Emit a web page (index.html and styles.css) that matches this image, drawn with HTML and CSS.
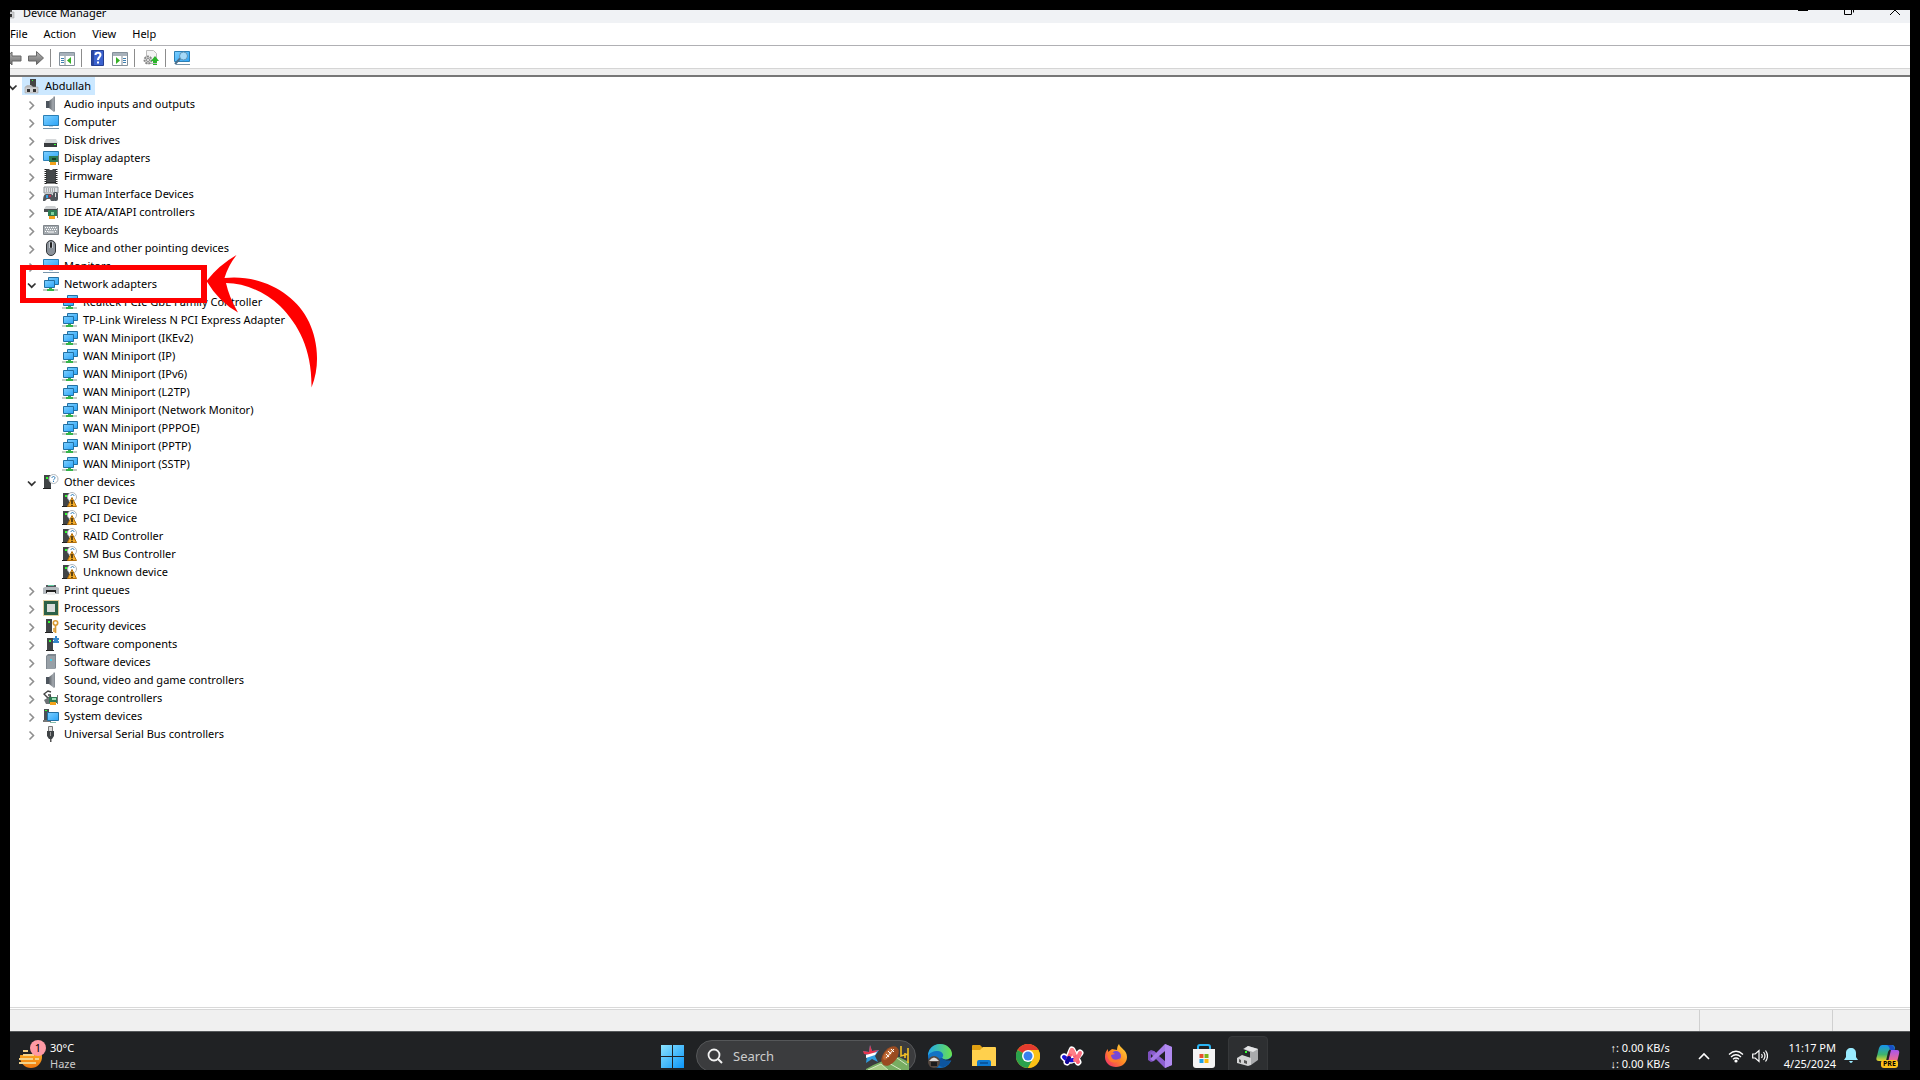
FILE: index.html
```html
<!DOCTYPE html>
<html lang="en">
<head>
    <meta charset="UTF-8">
    <meta name="viewport" content="width=device-width, initial-scale=1.0">
    <title>Device Manager</title>
    <link rel="stylesheet" href="styles.css">
</head>
<body>

    <!-- shared icons -->
    <svg class="sprite" aria-hidden="true">
        <defs>
            <linearGradient id="sky" x1="0" y1="0" x2="1" y2="1"><stop offset="0" stop-color="#7fd0ff"/><stop offset="1" stop-color="#2ba4f8"/></linearGradient>
            <linearGradient id="metal" x1="0" y1="0" x2="1" y2="0"><stop offset="0" stop-color="#5d636a"/><stop offset="1" stop-color="#b4b9be"/></linearGradient>
            <linearGradient id="arrowgrey" x1="0" y1="0" x2="0" y2="1"><stop offset="0" stop-color="#b5b5b5"/><stop offset="1" stop-color="#6b6b6b"/></linearGradient>
        </defs>
        <symbol id="closed" viewBox="0 0 16 16"><path d="M5.500 5.500l4 4-4 4" fill="none" stroke="#8f8f8f" stroke-width="1.6"/></symbol>
        <symbol id="open" viewBox="0 0 16 16"><path d="M4 7.500l3.700 3.700L11.500 7.500" fill="none" stroke="#333" stroke-width="1.7"/></symbol>
        <symbol id="i-root" viewBox="0 0 16 16"><path d="M6 1h6v9H6z" fill="#444"/><path d="M8 2h1v1H8z" fill="#3f3"/><path d="M3 7h4l2 2h5v6H1V9z" fill="#b9bcc0"/><path d="M1 9h13v6H1z" fill="#cfd1d4" stroke="#999" stroke-width=".5"/><path d="M3 11h3v3H3zM9 11h3v3H9z" fill="#333"/></symbol>
        <symbol id="i-audio" viewBox="0 0 16 16"><path d="M3 5h4v7H3z" fill="#4d555e"/><path d="M6 5l5-4v15l-5-4z" fill="url(#metal)"/><path d="M10.500 .5h1.500v15h-1.500z" fill="#8a9097"/></symbol>
        <symbol id="i-computer" viewBox="0 0 16 16"><path d="M.5 1.500h15v10H.5z" fill="url(#sky)" stroke="#2b7fb5"/><path d="M6 12h4v1H6z" fill="#b9d2e4"/><path d="M0 14h16v1H0z" fill="#7895ab"/></symbol>
        <symbol id="i-disk" viewBox="0 0 16 16"><path d="M3 7h10l2 4H1z" fill="#d5d7d9"/><path d="M1 11h13v4H1z" fill="#3a3d40"/><path d="M11 12h2v1h-2z" fill="#3f3"/></symbol>
        <symbol id="i-display" viewBox="0 0 16 16"><path d="M.5 1.500h15v9H.5z" fill="url(#sky)" stroke="#2b7fb5"/><path d="M6 6h9v6H6z" fill="#2e7b54"/><path d="M9 8h4v2H9z" fill="#153f2a"/><path d="M7 12h6v3H7z" fill="#f3a21b"/><path d="M15 5h1v10h-1z" fill="#777"/></symbol>
        <symbol id="i-firmware" viewBox="0 0 16 16"><path d="M3 1h3l1 1h2l1-1h3v14H3z" fill="#45484a"/><path d="M2.500 1v15M13.500 1v15" stroke="#222" stroke-width="2" stroke-dasharray="1 1"/><path d="M3 15h10" stroke="#111"/></symbol>
        <symbol id="i-hid" viewBox="0 0 16 16"><path d="M1 1h14v6H1z" fill="#dfe2e5" stroke="#8d9296"/><path d="M3 3h10M3 5h10" stroke="#777" stroke-dasharray="1 1"/><path d="M0 15c0-4 1-7 3-7h5c2 0 3 3 3 7H8l-1-2H4l-2 2z" fill="#53585d"/><path d="M3 9h2v3H3z" fill="#39a2e8"/><circle cx="7" cy="10" r="1" fill="#e25"/><rect x="10" y="6" width="5" height="9" rx="2" fill="#4f555b"/><path d="M12 7h1v4h-1z" fill="#ddd"/></symbol>
        <symbol id="i-ide" viewBox="0 0 16 16"><path d="M3 2h9l2 3H1z" fill="#ced1d3"/><path d="M1 5h13v3H1z" fill="#4a4d50"/><path d="M5 6h9v6H5z" fill="#2e7b54"/><path d="M8 8h3v3H8z" fill="#7fd4a0"/><path d="M6 12h6v3H6z" fill="#f3a21b"/><path d="M14 4h1v10h-1z" fill="#777"/></symbol>
        <symbol id="i-keyboard" viewBox="0 0 16 16"><path d="M.5 3.500h15v9H.5z" fill="#a3a9ae" stroke="#7f858a"/><path d="M2 5.500h12M3 7.500h11M2 9.500h3M12 9.500h2" stroke="#fff" stroke-dasharray="1 1"/><path d="M5 10h6" stroke="#fff"/></symbol>
        <symbol id="i-mouse" viewBox="0 0 16 16"><rect x="3.500" y=".5" width="9" height="15" rx="4.500" fill="#8a9199" stroke="#33373b"/><path d="M6 2h4v6H6z" fill="#c5cad0"/><rect x="7" y="2" width="2" height="6" rx="1" fill="#222"/></symbol>
        <symbol id="i-network" viewBox="0 0 16 16"><path d="M5.500 1.500h10v7h-10z" fill="url(#sky)" stroke="#2270a3"/><path d="M1.500 4.500h10v7h-10z" fill="url(#sky)" stroke="#2270a3"/><path d="M0 13h15v2H0z" fill="#c4cbc4"/><path d="M6 12h3v1h2v2H4v-2h2z" fill="#35b44a"/></symbol>
        <symbol id="i-other" viewBox="0 0 16 16"><path d="M1 1h7v13H1z" fill="#414446"/><path d="M0 14h8v1H0z" fill="#222"/><path d="M3 3h2v2H3z" fill="#3f3"/><circle cx="10.500" cy="5" r="4.500" fill="#fff" stroke="#b0b6bb"/><path d="M9 4c0-2 3-2 3 0 0 1-1.500 1-1.500 2.300M10.500 7v1" fill="none" stroke="#2a7ab8"/></symbol>
        <symbol id="i-unknown" viewBox="0 0 16 16"><path d="M1 1h6v13H1z" fill="#414446"/><path d="M0 14h6v1H0z" fill="#222"/><path d="M3 3h2v2H3z" fill="#3f3"/><circle cx="10" cy="5" r="4.500" fill="#fff" stroke="#b0b6bb"/><path d="M9 4c0-2 3-2 3 0" fill="none" stroke="#2a7ab8"/><path d="M10 5.500l4.500 9h-9z" fill="#f5ae2c" stroke="#b36f0b"/><path d="M10 8v4M10 12.700v1.200" stroke="#000" stroke-width="1.200"/></symbol>
        <symbol id="i-print" viewBox="0 0 16 16"><path d="M3 3h10v4H3z" fill="#53585d"/><path d="M5 3h6v1H5z" fill="#5fc9a0"/><path d="M0 6l2-1h12l2 1v6H0z" fill="#b5babf"/><path d="M3 8h10v3H3z" fill="#222"/><path d="M4 10h8v3H4z" fill="#eee"/></symbol>
        <symbol id="i-cpu" viewBox="0 0 16 16"><path d="M.5 .5h15v15H.5z" fill="none" stroke="#c6a23b" stroke-dasharray="1 1"/><path d="M1 1h14v14H1z" fill="#2c6148"/><path d="M4 4h8v8H4z" fill="#dadddb"/></symbol>
        <symbol id="i-security" viewBox="0 0 16 16"><path d="M3 1h6v13H3z" fill="#414446"/><path d="M2 14h8v1H2z" fill="#222"/><path d="M5 3h2v2H5z" fill="#3f3"/><circle cx="12.500" cy="5" r="2.200" fill="none" stroke="#d99a33" stroke-width="1.600"/><path d="M12.500 7v8M12 11h-2M12 13h-2" stroke="#d99a33" stroke-width="1.700"/></symbol>
        <symbol id="i-component" viewBox="0 0 16 16"><path d="M4 2h6v12H4z" fill="#414446"/><path d="M3 14h8v1H3z" fill="#222"/><path d="M6 4h2v2H6z" fill="#3f3"/><path d="M10 2h2V0h2v2h2v2h-1v1h1v2h-6V5h1V4h-1z" fill="#3587cb"/></symbol>
        <symbol id="i-softdev" viewBox="0 0 16 16"><path d="M3 2l2-2h8v14l-1 1H3z" fill="#7f8890"/><path d="M4 2h8v13H4z" fill="#98a0a7"/><path d="M7 5h2v2H7z" fill="#47d0ea"/></symbol>
        <symbol id="i-storage" viewBox="0 0 16 16"><path d="M8 2L5 1 1 4l4 4 3-2M5 5h3" fill="none" stroke="#444" stroke-width="1.400"/><path d="M1 10l5-3 2 3v4H3z" fill="#6d7276"/><path d="M6 7h8v6H6z" fill="#2e7b54"/><path d="M9 8h4v2H9z" fill="#9fe0b7"/><path d="M7 12h6v3H7z" fill="#f3a21b"/><path d="M14 5h1v9h-1z" fill="#777"/></symbol>
        <symbol id="i-system" viewBox="0 0 16 16"><path d="M1 1h5v11H1z" fill="#4b5055"/><path d="M2 2h2v1H2z" fill="#3f3"/><path d="M0 12h8v2H0z" fill="#777"/><path d="M4.500 4.500h11v8h-11z" fill="url(#sky)" stroke="#2270a3"/><path d="M7 14h6v1H7z" fill="#8ba"/></symbol>
        <symbol id="i-usb" viewBox="0 0 16 16"><path d="M5.500 .5h4v5h-4z" fill="#ddd" stroke="#777"/><path d="M4 5h7v5l-2 3H6l-2-3z" fill="#3f4346"/><path d="M7 6h1v4H7z" fill="#999"/><path d="M7 13h1.500v3H7z" fill="#555"/></symbol>
    </svg>

    <div class="screen">
        <header class="titlebar">
            <svg class="icon"><use href="#i-root"/></svg>
            <h1>Device Manager</h1>
            <div class="window-buttons">
                <button aria-label="Minimize"><svg width="10" height="10"><path d="M0 5h10v1H0z"/></svg></button>
                <button aria-label="Restore"><svg width="10" height="10"><path d="M.5 2.500h7v7h-7zM2.500 .5h7v7" fill="none" stroke="#000"/></svg></button>
                <button aria-label="Close"><svg width="10" height="10"><path d="M0 0l10 10M10 0L0 10" stroke="#000"/></svg></button>
            </div>
        </header>

        <nav class="menu">
            <button>File</button>
            <button>Action</button>
            <button>View</button>
            <button>Help</button>
        </nav>

        <div class="toolbar">
            <button aria-label="Back"><svg width="12" height="16"><path d="M-5 8l7-6v4h9v5H2v4z" fill="url(#arrowgrey)" stroke="#666"/></svg></button>
            <button aria-label="Forward"><svg width="16" height="16"><path d="M.5 6h8V1.500L15.500 8l-7 6.500V11h-8z" fill="url(#arrowgrey)" stroke="#666"/></svg></button>
            <i></i>
            <button aria-label="Show console tree"><svg width="16" height="16"><path d="M.5 2.500h15v13H.5z" fill="#fff" stroke="#84909a"/><path d="M1 3h14v3H1z" fill="#a7b1ba"/><path d="M6 6v9" stroke="#84909a"/><path d="M2 8.500h3M2 10.500h3M2 12.500h3" stroke="#3f7fb0"/><path d="M12 7v7l-4-3.500z" fill="#35b024"/></svg></button>
            <i></i>
            <button aria-label="Help topics"><svg width="16" height="16"><path d="M1.500 .5h12v15h-12z" fill="#3b62cf" stroke="#253f92"/><path d="M2 1h2v14H2z" fill="#2a479f"/><path d="M5.500 5c0-3 5-3 5 0 0 2-2.500 2-2.500 5M8 11.500v2" fill="none" stroke="#fff" stroke-width="2"/></svg></button>
            <button aria-label="Show action pane"><svg width="16" height="16"><path d="M.5 2.500h15v13H.5z" fill="#fff" stroke="#84909a"/><path d="M1 3h14v3H1z" fill="#a7b1ba"/><path d="M10 6v9" stroke="#84909a"/><path d="M11 8.500h3M11 10.500h3M11 12.500h3" stroke="#3f7fb0"/><path d="M4 7v7l4-3.500z" fill="#35b024"/></svg></button>
            <i></i>
            <button aria-label="Update driver"><svg width="16" height="16"><path d="M3.500 .5h7l3 3v10h-10z" fill="#f4f4f4" stroke="#bbb"/><circle cx="5" cy="10" r="3.500" fill="#ddd" stroke="#888" stroke-width="2" stroke-dasharray="2 1"/><circle cx="5" cy="10" r="1.500" fill="#fff" stroke="#888"/><path d="M12 6l4 5h-2v2h-4v-2H8zM10 14h4v1h-4z" fill="#2bb52b"/></svg></button>
            <i></i>
            <button aria-label="Scan for hardware changes"><svg width="16" height="16"><path d="M.5 1.500h15v10H.5z" fill="url(#sky)" stroke="#2b7fb5"/><path d="M2 14.500h14" stroke="#7895ab"/><path d="M6.500 8L1 14" stroke="#496f8c" stroke-width="2"/><circle cx="9.500" cy="6" r="4" fill="#a5d9f8" stroke="#5f94b5"/></svg></button>
        </div>
        <div class="band"></div>

        <main class="content">
            <ul class="tree">
                <li>
                    <div class="row"><button aria-label="Collapse"><svg><use href="#open"/></svg></button><span class="node selected"><svg><use href="#i-root"/></svg>Abdullah</span></div>
                    <ul>
                        <li class="row"><button aria-label="Expand"><svg><use href="#closed"/></svg></button><span class="node"><svg><use href="#i-audio"/></svg>Audio inputs and outputs</span></li>
                        <li class="row"><button aria-label="Expand"><svg><use href="#closed"/></svg></button><span class="node"><svg><use href="#i-computer"/></svg>Computer</span></li>
                        <li class="row"><button aria-label="Expand"><svg><use href="#closed"/></svg></button><span class="node"><svg><use href="#i-disk"/></svg>Disk drives</span></li>
                        <li class="row"><button aria-label="Expand"><svg><use href="#closed"/></svg></button><span class="node"><svg><use href="#i-display"/></svg>Display adapters</span></li>
                        <li class="row"><button aria-label="Expand"><svg><use href="#closed"/></svg></button><span class="node"><svg><use href="#i-firmware"/></svg>Firmware</span></li>
                        <li class="row"><button aria-label="Expand"><svg><use href="#closed"/></svg></button><span class="node"><svg><use href="#i-hid"/></svg>Human Interface Devices</span></li>
                        <li class="row"><button aria-label="Expand"><svg><use href="#closed"/></svg></button><span class="node"><svg><use href="#i-ide"/></svg>IDE ATA/ATAPI controllers</span></li>
                        <li class="row"><button aria-label="Expand"><svg><use href="#closed"/></svg></button><span class="node"><svg><use href="#i-keyboard"/></svg>Keyboards</span></li>
                        <li class="row"><button aria-label="Expand"><svg><use href="#closed"/></svg></button><span class="node"><svg><use href="#i-mouse"/></svg>Mice and other pointing devices</span></li>
                        <li class="row"><button aria-label="Expand"><svg><use href="#closed"/></svg></button><span class="node"><svg><use href="#i-computer"/></svg>Monitors</span></li>
                        <li>
                            <div class="row"><button aria-label="Collapse"><svg><use href="#open"/></svg></button><span class="node"><svg><use href="#i-network"/></svg>Network adapters</span></div>
                            <ul class="leaves">
                                <li class="row"><span class="node"><svg><use href="#i-network"/></svg>Realtek PCIe GbE Family Controller</span></li>
                                <li class="row"><span class="node"><svg><use href="#i-network"/></svg>TP-Link Wireless N PCI Express Adapter</span></li>
                                <li class="row"><span class="node"><svg><use href="#i-network"/></svg>WAN Miniport (IKEv2)</span></li>
                                <li class="row"><span class="node"><svg><use href="#i-network"/></svg>WAN Miniport (IP)</span></li>
                                <li class="row"><span class="node"><svg><use href="#i-network"/></svg>WAN Miniport (IPv6)</span></li>
                                <li class="row"><span class="node"><svg><use href="#i-network"/></svg>WAN Miniport (L2TP)</span></li>
                                <li class="row"><span class="node"><svg><use href="#i-network"/></svg>WAN Miniport (Network Monitor)</span></li>
                                <li class="row"><span class="node"><svg><use href="#i-network"/></svg>WAN Miniport (PPPOE)</span></li>
                                <li class="row"><span class="node"><svg><use href="#i-network"/></svg>WAN Miniport (PPTP)</span></li>
                                <li class="row"><span class="node"><svg><use href="#i-network"/></svg>WAN Miniport (SSTP)</span></li>
                            </ul>
                        </li>
                        <li>
                            <div class="row"><button aria-label="Collapse"><svg><use href="#open"/></svg></button><span class="node"><svg><use href="#i-other"/></svg>Other devices</span></div>
                            <ul class="leaves">
                                <li class="row"><span class="node"><svg><use href="#i-unknown"/></svg>PCI Device</span></li>
                                <li class="row"><span class="node"><svg><use href="#i-unknown"/></svg>PCI Device</span></li>
                                <li class="row"><span class="node"><svg><use href="#i-unknown"/></svg>RAID Controller</span></li>
                                <li class="row"><span class="node"><svg><use href="#i-unknown"/></svg>SM Bus Controller</span></li>
                                <li class="row"><span class="node"><svg><use href="#i-unknown"/></svg>Unknown device</span></li>
                            </ul>
                        </li>
                        <li class="row"><button aria-label="Expand"><svg><use href="#closed"/></svg></button><span class="node"><svg><use href="#i-print"/></svg>Print queues</span></li>
                        <li class="row"><button aria-label="Expand"><svg><use href="#closed"/></svg></button><span class="node"><svg><use href="#i-cpu"/></svg>Processors</span></li>
                        <li class="row"><button aria-label="Expand"><svg><use href="#closed"/></svg></button><span class="node"><svg><use href="#i-security"/></svg>Security devices</span></li>
                        <li class="row"><button aria-label="Expand"><svg><use href="#closed"/></svg></button><span class="node"><svg><use href="#i-component"/></svg>Software components</span></li>
                        <li class="row"><button aria-label="Expand"><svg><use href="#closed"/></svg></button><span class="node"><svg><use href="#i-softdev"/></svg>Software devices</span></li>
                        <li class="row"><button aria-label="Expand"><svg><use href="#closed"/></svg></button><span class="node"><svg><use href="#i-audio"/></svg>Sound, video and game controllers</span></li>
                        <li class="row"><button aria-label="Expand"><svg><use href="#closed"/></svg></button><span class="node"><svg><use href="#i-storage"/></svg>Storage controllers</span></li>
                        <li class="row"><button aria-label="Expand"><svg><use href="#closed"/></svg></button><span class="node"><svg><use href="#i-system"/></svg>System devices</span></li>
                        <li class="row"><button aria-label="Expand"><svg><use href="#closed"/></svg></button><span class="node"><svg><use href="#i-usb"/></svg>Universal Serial Bus controllers</span></li>
                    </ul>
                </li>
            </ul>

            <!-- callout over the network adapters row -->
            <div class="highlight"></div>
            <svg class="pointer" viewBox="206 254 112 134"><path d="M206.500 281Q219 265 236.500 255Q228 266 224.500 278C262 274 296 294 309 322C317 339 321 364 311.500 387.500C312 350 299 325 280 306C265 292 245 283 226 283Q229 297 238 312.500Q219 302 206.500 281z" fill="#f00"/></svg>
        </main>

        <div class="statusbar"><span></span><span></span><span></span></div>

        <footer class="taskbar">
            <button class="weather">
                <svg width="28" height="32" viewBox="0 0 28 32"><defs><linearGradient id="sun" x1="0" y1="0" x2="0" y2="1"><stop offset="0" stop-color="#ffc22e"/><stop offset="1" stop-color="#f0780e"/></linearGradient></defs><circle cx="13" cy="17" r="11" fill="url(#sun)"/><path d="M0 0h28v15H0z" fill="#202224"/><path d="M5 11h5M5 15h11M1 19h14M17 19h4M1 23h17" stroke="#f3d28a" stroke-width="2"/><circle cx="20" cy="8" r="8" fill="#ff99a4"/></svg>
                <b>1</b>
                <span>30°C<br><em>Haze</em></span>
            </button>

            <div class="apps">
                <button aria-label="Start"><svg width="24" height="24"><defs><linearGradient id="win" x1="0" y1="0" x2="1" y2="1"><stop offset="0" stop-color="#8be4ff"/><stop offset="1" stop-color="#0b95f8"/></linearGradient></defs><path d="M1 1h11v11H1zM13 1h11v11H13zM1 13h11v11H1zM13 13h11v11H13z" fill="url(#win)"/></svg></button>
                <label class="search">
                    <svg width="16" height="16"><circle cx="7" cy="7" r="5.500" fill="none" stroke="#f2f2f2" stroke-width="1.800"/><path d="M11 11l4 4" stroke="#f2f2f2" stroke-width="2"/></svg>
                    <input type="text" placeholder="Search" aria-label="Search">
                    <svg width="50" height="30" viewBox="0 0 50 30"><path d="M5 28Q22 18 38 16L48 21V30H5z" fill="#78ad62"/><path d="M7 29l13-6 8 7M26 21l14 8M36 17l10 7" stroke="#d7e8c4" fill="#a7cd85"/><path d="M9 4l2 6 7-1-4 6 3 6-6-3-6 4 1-7-4-5 6 1z" fill="#2f9de0"/><path d="M9 4l2 6 7-1-8 5-7-1-1-3 6 1z" fill="#e5354e"/><path d="M5 14l7-2 4-1-2 3-9 3z" fill="#fff"/><ellipse cx="29" cy="15" rx="11" ry="7" transform="rotate(-52 29 15)" fill="#9a4b21"/><ellipse cx="27" cy="13" rx="7" ry="3" transform="rotate(-52 27 13)" fill="#be6b37"/><path d="M25 17l8-9M25 13l3 3M27 10l3 3M30 8l3 3" stroke="#fff"/><path d="M40 5v10l7-2M47 7v15M44 12v5" fill="none" stroke="#f4c025" stroke-width="1.600"/></svg>
                </label>
                <button aria-label="Edge"><svg width="24" height="24"><defs><linearGradient id="edge" x1="0" y1="0" x2="1" y2="0"><stop offset="0" stop-color="#21a8ee"/><stop offset="1" stop-color="#6be34c"/></linearGradient></defs><circle cx="12" cy="12" r="12" fill="#1373c4"/><path d="M0 12C0 5 5 0 12 0s12 5 12 10c0 5-7 7-10 4 3-3 0-7-4-7C5 7 1 9 0 12z" fill="url(#edge)"/><path d="M14 14c2 3 6 3 9 2-2 5-6 7-8 7-4 0-7-4-6-8z" fill="#0d559e"/><path d="M14 14c3 3 8 2 10-2v4c-3 1-8 1-10-2z" fill="#202224"/><circle cx="6" cy="18" r="6" fill="#55483f"/><path d="M1 17q5-7 10 0z" fill="#ddd"/><path d="M3 18h6v4H3z" fill="#1c1c1c"/></svg></button>
                <button aria-label="File Explorer"><svg width="24" height="24"><path d="M0 2q0-1 1-1h7l3 3v4H0z" fill="#e0a012"/><path d="M0 6h8l3-3h12q1 0 1 1v18H0z" fill="#ffd04d"/><path d="M5 22v-4q0-2 2-2h10q2 0 2 2v4z" fill="#0e7ad1"/><path d="M8 19h8" stroke="#0957a0" stroke-width="2"/></svg></button>
                <button aria-label="Chrome"><svg width="24" height="24"><circle cx="12" cy="12" r="12" fill="#fbc116"/><path d="M12 12L1.600 6A12 12 0 0 1 22.400 6z" fill="#e33b2e"/><path d="M12 12L1.600 6A12 12 0 0 0 12 24l5-9z" fill="#2aa24c"/><path d="M12 6h10.400A12 12 0 0 1 12 24l5-9z" fill="#fbc116"/><circle cx="12" cy="12" r="6" fill="#fff"/><circle cx="12" cy="12" r="4.500" fill="#3880ee"/></svg></button>
                <button aria-label="Arc"><svg width="24" height="24"><g stroke-linecap="round" stroke-linejoin="round" fill="none"><path d="M7 18l5-12 6 12M4 13q7 8 16-4" stroke="#fff" stroke-width="7"/><path d="M4 13q4 4 9 3" stroke="#1810d8" stroke-width="4"/><path d="M7 18l5-12 6 12" stroke="#fb5f73" stroke-width="4"/><path d="M15 16q4-3 5-7" stroke="#fb6f80" stroke-width="4"/><path d="M7 18l2-4" stroke="#0c0898" stroke-width="4"/><path d="M11 8l1-2 2 4" stroke="#ff8088" stroke-width="4"/></g></svg></button>
                <button aria-label="Firefox"><svg width="24" height="24"><defs><linearGradient id="fox" x1="1" y1="0" x2="0" y2="1"><stop offset="0" stop-color="#ffe23c"/><stop offset=".5" stop-color="#ff8a24"/><stop offset="1" stop-color="#f02276"/></linearGradient></defs><path d="M15 0c1 4 8 6 8 13 0 6-5 10-11 10S1 19 1 13c0-4 1-6 3-8v3l4-3 5 1c0-3 1-5 2-6z" fill="url(#fox)"/><circle cx="12" cy="12" r="5" fill="#7748d6"/><path d="M3 8q5-1 8 2l-4 1c0 5 6 6 9 3-1 6-10 6-12 0z" fill="#ff7b2d"/></svg></button>
                <button aria-label="Visual Studio"><svg width="24" height="24"><path d="M3 6l3 1 12 11V6L6 17l-3 1-3-2V8z" fill="#7d50bd"/><path d="M3 9v6l3-3z" fill="#202224"/><path d="M17 0l7 3v18l-7 3L2 9l4-2 11 10z" fill="#8c5fd0"/><path d="M17 0l7 3v18l-7 3z" fill="#b18af0"/><path d="M17 7v10l-6-5z" fill="#202224"/><path d="M17 0v7L5 17l-3-2z" fill="#a57be6"/></svg></button>
                <button aria-label="Microsoft Store"><svg width="24" height="24"><path d="M6 6V3q0-2 2-2h8q2 0 2 2v3" fill="none" stroke="#2ab5f5" stroke-width="2"/><path d="M1 5h22v16q0 3-3 3H4q-3 0-3-3z" fill="#f4f4f4"/><path d="M7.500 10h4v4h-4z" fill="#e8502d"/><path d="M12.500 10h4v4h-4z" fill="#7cb518"/><path d="M7.500 15h4v4h-4z" fill="#1ba0e8"/><path d="M12.500 15h4v4h-4z" fill="#fab90c"/></svg></button>
                <button class="active" aria-label="Device Manager"><svg width="24" height="24"><path d="M7 5l5-3 10 3v11l-7 5-8-3z" fill="#a9abad"/><path d="M12 2l10 3-5 3-9-3z" fill="#e4e5e6"/><path d="M7 5l7 3v6l-7-2z" fill="#26292b"/><path d="M9 7h2v2H9z" fill="#3f3"/><path d="M1 14l5-3 9 3v7l-3 1-11-3z" fill="#d3d4d5"/><path d="M3 15l2 1v3l-2-1zM8 16l3 1v3l-3-1z" fill="#555"/></svg></button>
            </div>

            <div class="tray">
                <div class="speed">↑: 0.00 KB/s<br>↓: 0.00 KB/s</div>
                <button aria-label="Show hidden icons"><svg width="12" height="8"><path d="M1 7l5-5 5 5" fill="none" stroke="#fff" stroke-width="1.600"/></svg></button>
                <button class="net" aria-label="Network and sound">
                    <svg width="16" height="14"><path d="M1 5.500q7-6.500 14 0M3 8q5-4.500 10 0M5 10.300q3-2.600 6 0" fill="none" stroke="#fff" stroke-width="1.300"/><circle cx="8" cy="12" r="1.600" fill="#fff"/></svg>
                    <svg width="16" height="14"><path d="M.7 5h2.500L7 1.500v11L3.200 9H.7zM9.500 5q1.500 2 0 4M11.500 3q3 4 0 8M13.500 1.500q4 5.500 0 11" fill="none" stroke="#fff" stroke-width="1.200"/></svg>
                </button>
                <button class="clock">11:17 PM<br>4/25/2024</button>
                <button aria-label="Notifications"><svg width="14" height="16"><path d="M7 0c-3 0-5 2-5 5v4l-2 3h14l-2-3V5c0-3-2-5-5-5zM5 13h4q-2 4-4 0z" fill="#99ebff"/></svg></button>
                <button class="copilot" aria-label="Copilot">
                    <svg width="24" height="24"><defs><linearGradient id="cop" x1="0" y1="0" x2="0" y2="1"><stop offset="0" stop-color="#1593ee"/><stop offset=".6" stop-color="#3fb56b"/><stop offset="1" stop-color="#e8d52d"/></linearGradient><linearGradient id="pil" x1="0" y1="0" x2="0" y2="1"><stop offset="0" stop-color="#a856ef"/><stop offset="1" stop-color="#fb6f80"/></linearGradient></defs><path d="M6 1h10q3 0 3 4h-4q-2 0-3 3l-2 9H3q-4 0-2-5l2-8q1-3 3-3z" fill="url(#cop)"/><path d="M15 1q3 0 4 5h-5q-1-5-4-5z" fill="#1a4fc4"/><path d="M15 6h6q3 0 2 4l-2 8h-9z" fill="url(#pil)"/></svg>
                    <small>PRE</small>
                </button>
            </div>
        </footer>
    </div>

</body>
</html>
```

FILE: styles.css
```css
* {
    box-sizing: border-box;
}

body {
    margin: 0;
    height: 100vh;
    padding: 10px;
    background: #000;
    color: #000;
    font-family: "Noto Sans", "Open Sans", sans-serif;
    font-size: 11px;
    line-height: 16px;
}

button {
    display: flex;
    align-items: center;
    padding: 0;
    border: none;
    background: none;
    color: inherit;
    font: inherit;
}

svg {
    display: block;
    flex: none;
}

.sprite {
    position: absolute;
    width: 0;
    height: 0;
}

.screen {
    display: flex;
    flex-direction: column;
    height: 100%;
    overflow: hidden;
    background: #fff;
}

/* title bar */
.titlebar {
    display: flex;
    align-items: flex-end;
    height: 13px;
    overflow: hidden;
    background: #f0f2f5;
}

.titlebar .icon {
    width: 16px;
    height: 16px;
    margin: 0 7px 4px -10px;
}

.titlebar h1 {
    flex: 1;
    margin: 0 0 2px;
    font-size: 11px;
    font-weight: normal;
}

.window-buttons {
    display: flex;
    margin-right: -8px;
}

.window-buttons button {
    justify-content: center;
    width: 46px;
    padding-bottom: 8px;
}

.menu {
    display: flex;
    gap: 16px;
    height: 23px;
    border-bottom: 1px solid #b0b0b4;
}

.toolbar {
    display: flex;
    align-items: center;
    gap: 6px;
    height: 22px;
    padding-top: 2px;
}

.toolbar i {
    width: 1px;
    height: 18px;
    margin-right: 2px;
    background: #8c8c8c;
}

.band {
    height: 9px;
    border-top: 1px solid #d5d5d5;
    border-bottom: 2px solid #777;
    background: #f0f0f0;
}

/* device tree */
.content {
    position: relative;
    flex: 1;
    min-height: 0;
}

.tree,
.tree ul {
    margin: 0;
    padding: 0;
    list-style: none;
}

.tree {
    margin-left: -5px;
}

.tree ul {
    padding-left: 19px;
}

.tree .leaves {
    padding-left: 36px;
}

.row {
    display: flex;
    gap: 1px;
    height: 18px;
}

.row svg {
    width: 16px;
    height: 16px;
}

.node {
    display: flex;
    align-items: center;
    gap: 5px;
    padding: 0 4px 0 2px;
    white-space: nowrap;
}

.selected {
    background: #cce8ff;
}

.highlight {
    position: absolute;
    left: 10px;
    top: 188px;
    width: 187px;
    height: 38px;
    border: 5px solid #f00;
    border-width: 5px 6px;
}

.pointer {
    position: absolute;
    left: 196px;
    top: 177px;
    width: 112px;
    height: 134px;
}

.statusbar {
    display: flex;
    height: 25px;
    padding-top: 2px;
    border-top: 1px solid #d9d9d9;
    border-bottom: 1px solid #55585a;
    background: linear-gradient(#fff 1px, #d7d7d7 1px, #d7d7d7 2px, #f0f0f0 2px);
}

.statusbar span {
    width: 133px;
    border-right: 1px solid #d0d0d0;
}

.statusbar span:first-child {
    flex: 1;
}

.statusbar span:last-child {
    width: 77px;
    border: none;
}

/* taskbar */
.taskbar {
    display: grid;
    grid-template-columns: 1fr auto 1fr;
    height: 48px;
    margin-bottom: -10px;
    background: #202224;
    color: #fff;
}

.weather {
    position: relative;
    gap: 4px;
    justify-self: start;
    padding-left: 8px;
    text-align: left;
}

.weather b {
    position: absolute;
    left: 20px;
    top: 8px;
    width: 16px;
    text-align: center;
    font-weight: normal;
    color: #000;
}

.weather em {
    font-style: normal;
    color: #ccc;
}

.apps {
    display: flex;
    align-items: center;
    gap: 4px;
}

.apps button {
    justify-content: center;
    width: 40px;
    height: 40px;
    border-radius: 4px;
}

.apps .active {
    border: 1px solid #36383a;
    background: #2d2f31;
}

.search {
    display: flex;
    align-items: center;
    width: 220px;
    height: 32px;
    padding: 0 4px 0 10px;
    border: 1px solid #555759;
    border-radius: 16px;
    background: #3b3c3e;
}

.search input {
    flex: 1;
    min-width: 0;
    padding: 0 0 0 10px;
    border: none;
    background: none;
    color: #fff;
    font: inherit;
    font-size: 13px;
}

.search input::placeholder {
    color: #ccc;
}

.tray {
    display: flex;
    align-items: center;
    justify-content: flex-end;
    padding-right: 10px;
}

.speed {
    margin-right: 28px;
}

.net {
    gap: 8px;
    margin: 0 16px 0 18px;
}

.clock {
    margin-right: 8px;
    text-align: right;
}

.copilot {
    position: relative;
    margin-left: 18px;
}

.copilot small {
    position: absolute;
    left: 5px;
    top: 16px;
    padding: 0 2px;
    border-radius: 3px;
    background: #ffc21a;
    color: #000;
    font-size: 7px;
    font-weight: bold;
    line-height: 8px;
}
```
